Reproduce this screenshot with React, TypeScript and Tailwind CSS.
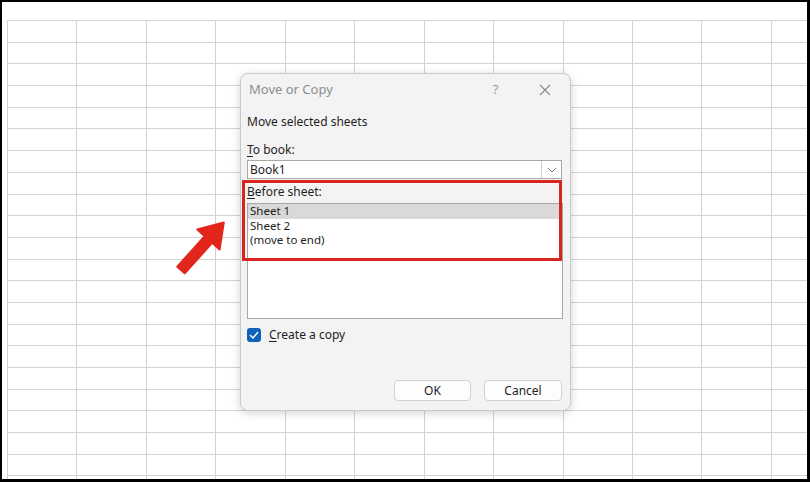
import React from 'react';

const font = { fontFamily: '"Noto Sans", "Open Sans", Arial, sans-serif' };

function SheetGrid() {
  const cells = Array.from({ length: 12 * 22 });
  return (
    <div className="pl-[5px] pt-[18px]">
      <div className="grid grid-cols-[repeat(12,69.45px)] auto-rows-[21.7px]">
        {cells.map((_, i) => (
          <div key={i} className="border-l border-t border-[#d4d1d9]" />
        ))}
      </div>
    </div>
  );
}

function Arrow() {
  return (
    <svg className="absolute left-[168px] top-[210px]" width="72" height="75" viewBox="0 0 72 75">
      <g transform="translate(13 60) rotate(-48)">
        <polygon
          points="0,-5 41,-5 41,-15 64,0 41,15 41,5 0,5"
          fill="#e3261b"
          stroke="#e3261b"
          strokeWidth="2"
          strokeLinejoin="round"
        />
      </g>
    </svg>
  );
}

function MoveOrCopyDialog() {
  const sheets = ['Sheet 1', 'Sheet 2', '(move to end)'];

  return (
    <div
      className="absolute left-[240px] top-[73px] w-[331px] h-[338px] rounded-[8px] border border-[#c8c8c8] bg-[#f3f3f3] shadow-[0_2px_10px_rgba(0,0,0,0.18)] text-[12px] text-[#1e1e1e]"
      style={font}
    >
      {/* title bar */}
      <div className="flex items-center h-[32px] pl-[8px]">
        <span className="text-[13px] text-[#8e8e8e]">Move or Copy</span>
        <span className="ml-[160px] text-[13px] text-[#9a9a9a]">?</span>
        <svg className="ml-[41px]" width="12" height="12" viewBox="0 0 12 12">
          <path d="M1 1 L11 11 M11 1 L1 11" stroke="#8a8a8a" strokeWidth="1.1" />
        </svg>
      </div>

      <div className="px-[6px]">
        <div className="mt-[8px] leading-[16px]">Move selected sheets</div>

        <div className="mt-[12px] leading-[16px]">
          <span className="underline underline-offset-2">T</span>o book:
        </div>
        <div className="mt-[2px] flex h-[19px] w-[315px] border border-[#a8a8a8] bg-white">
          <div className="flex-1 pl-[2px] leading-[17px]">Book1</div>
          <div className="flex w-[20px] items-center justify-center border-l border-[#d0d0d0]">
            <svg width="10" height="6" viewBox="0 0 10 6">
              <path d="M1 1 L5 5 L9 1" stroke="#777" strokeWidth="1" fill="none" />
            </svg>
          </div>
        </div>

        <div className="mt-[5px] leading-[16px]">
          <span className="underline underline-offset-2">B</span>efore sheet:
        </div>
        <div className="mt-[3px] h-[116px] w-[316px] border border-[#a8a8a8] bg-white">
          {sheets.map((s, i) => (
            <div
              key={s}
              className={`h-[14.5px] pl-[2px] text-[11.5px] leading-[14.5px] ${i === 0 ? 'bg-[#d9d9d9]' : ''}`}
            >
              {s}
            </div>
          ))}
        </div>

        <div className="mt-[8px] flex h-[16px] items-center gap-[8px]">
          <div className="flex h-[14px] w-[14px] items-center justify-center rounded-[3px] bg-[#0f62b8]">
            <svg width="10" height="8" viewBox="0 0 10 8">
              <path d="M1 4 L4 7 L9 1" stroke="white" strokeWidth="1.4" fill="none" />
            </svg>
          </div>
          <span>
            <span className="underline underline-offset-2">C</span>reate a copy
          </span>
        </div>

        <div className="mt-[37px] flex justify-end gap-[13px] pr-[2px]">
          <button className="h-[21px] w-[77px] rounded-[4px] border border-[#d2d2d2] bg-[#fdfdfd] text-[12px] text-[#1e1e1e]">
            OK
          </button>
          <button className="h-[21px] w-[78px] rounded-[4px] border border-[#d2d2d2] bg-[#fdfdfd] text-[12px] text-[#1e1e1e]">
            Cancel
          </button>
        </div>
      </div>
    </div>
  );
}

export default function App() {
  return (
    <div className="h-[482px] w-[810px] bg-black pb-[3px] pl-[2px] pr-[3px] pt-[2px]">
      <div className="relative h-full w-full overflow-hidden bg-white">
        <SheetGrid />
      </div>
      <Arrow />
      <MoveOrCopyDialog />
      {/* highlight around the Before sheet list */}
      <div className="absolute left-[242px] top-[180px] h-[81px] w-[320px] border-[3px] border-[#d7261e]" />
    </div>
  );
}
